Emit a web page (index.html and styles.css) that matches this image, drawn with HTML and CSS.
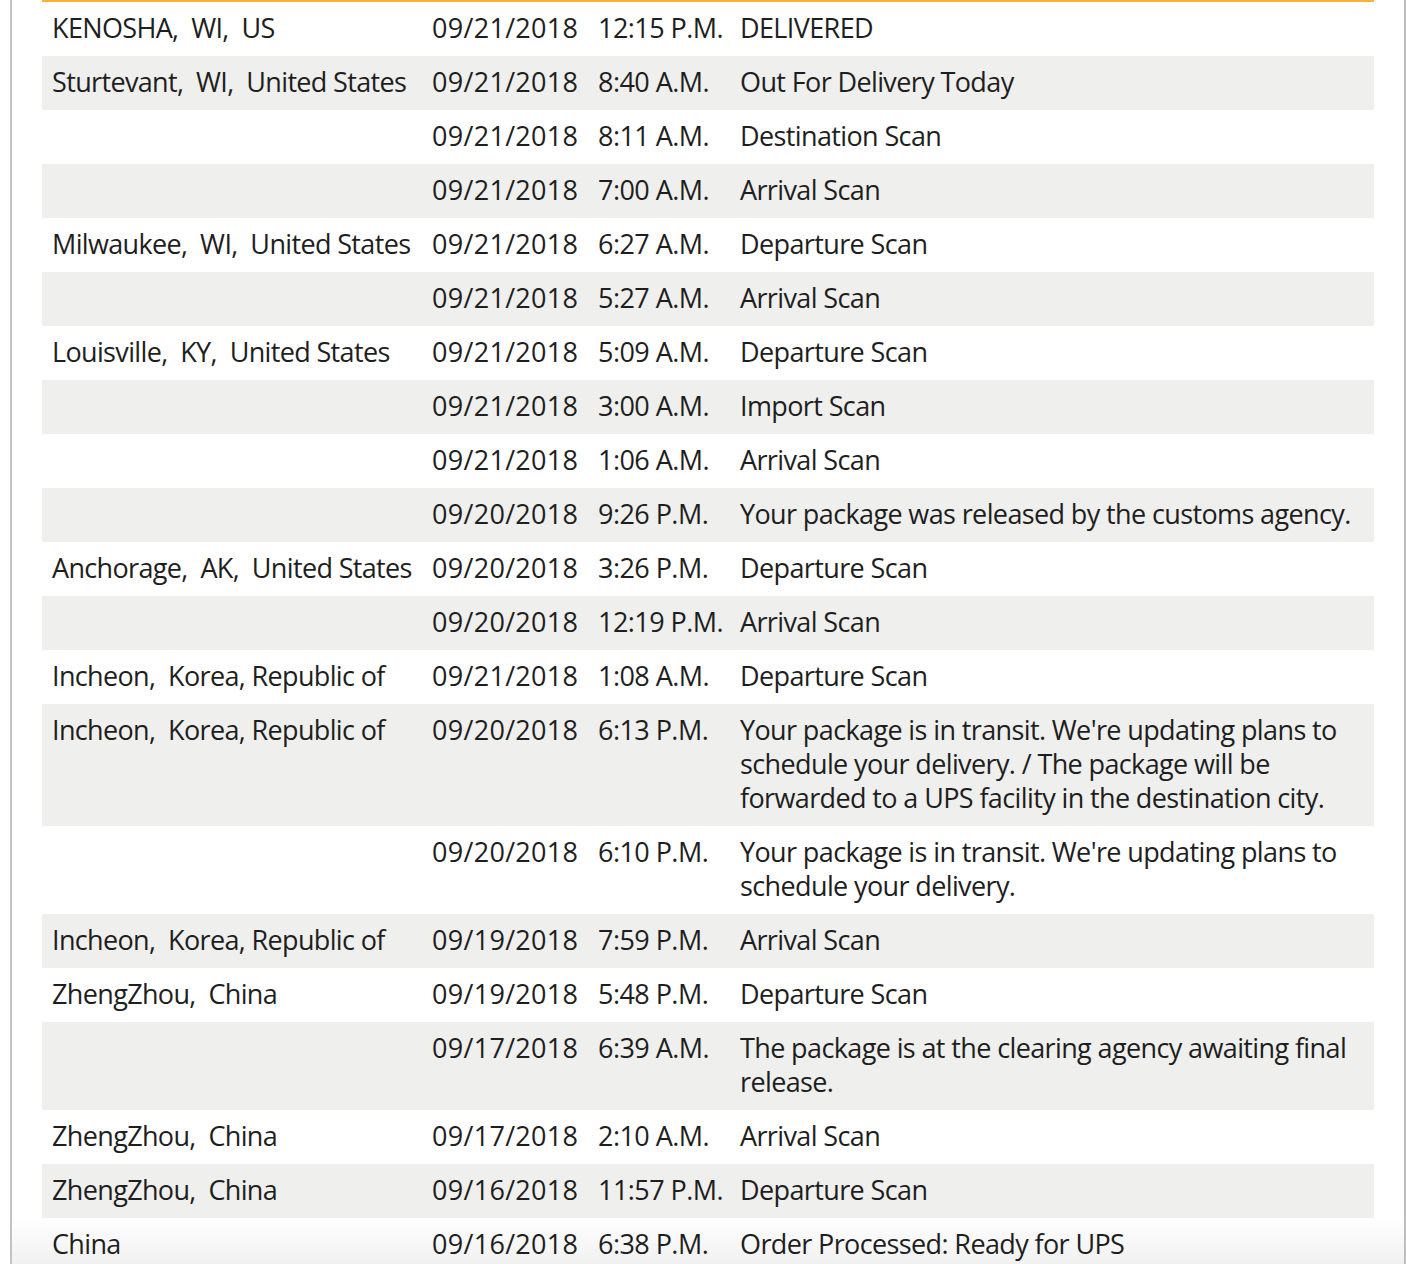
FILE: index.html
```html
<!DOCTYPE html>
<html lang="en">
<head>
<meta charset="utf-8">
<title>Shipment Progress</title>
<link rel="stylesheet" href="styles.css">
</head>
<body>
<div class="page">
  <table class="progress">
    <colgroup>
      <col class="c-loc"><col class="c-date"><col class="c-time"><col class="c-act">
    </colgroup>
    <tbody>
      <tr><td class="loc">KENOSHA,  WI,  US</td><td class="date">09/21/2018</td><td class="time">12:15 P.M.</td><td class="act">DELIVERED</td></tr>
      <tr><td class="loc">Sturtevant,  WI,  United States</td><td class="date">09/21/2018</td><td class="time">8:40 A.M.</td><td class="act">Out For Delivery Today</td></tr>
      <tr><td class="loc"></td><td class="date">09/21/2018</td><td class="time">8:11 A.M.</td><td class="act">Destination Scan</td></tr>
      <tr><td class="loc"></td><td class="date">09/21/2018</td><td class="time">7:00 A.M.</td><td class="act">Arrival Scan</td></tr>
      <tr><td class="loc">Milwaukee,  WI,  United States</td><td class="date">09/21/2018</td><td class="time">6:27 A.M.</td><td class="act">Departure Scan</td></tr>
      <tr><td class="loc"></td><td class="date">09/21/2018</td><td class="time">5:27 A.M.</td><td class="act">Arrival Scan</td></tr>
      <tr><td class="loc">Louisville,  KY,  United States</td><td class="date">09/21/2018</td><td class="time">5:09 A.M.</td><td class="act">Departure Scan</td></tr>
      <tr><td class="loc"></td><td class="date">09/21/2018</td><td class="time">3:00 A.M.</td><td class="act">Import Scan</td></tr>
      <tr><td class="loc"></td><td class="date">09/21/2018</td><td class="time">1:06 A.M.</td><td class="act">Arrival Scan</td></tr>
      <tr><td class="loc"></td><td class="date">09/20/2018</td><td class="time">9:26 P.M.</td><td class="act">Your package was released by the customs agency.</td></tr>
      <tr><td class="loc">Anchorage,  AK,  United States</td><td class="date">09/20/2018</td><td class="time">3:26 P.M.</td><td class="act">Departure Scan</td></tr>
      <tr><td class="loc"></td><td class="date">09/20/2018</td><td class="time">12:19 P.M.</td><td class="act">Arrival Scan</td></tr>
      <tr><td class="loc">Incheon,  Korea, Republic of</td><td class="date">09/21/2018</td><td class="time">1:08 A.M.</td><td class="act">Departure Scan</td></tr>
      <tr><td class="loc">Incheon,  Korea, Republic of</td><td class="date">09/20/2018</td><td class="time">6:13 P.M.</td><td class="act">Your package is in transit. We're updating plans to schedule your delivery. / The package will be forwarded to a UPS facility in the destination city.</td></tr>
      <tr><td class="loc"></td><td class="date">09/20/2018</td><td class="time">6:10 P.M.</td><td class="act">Your package is in transit. We're updating plans to schedule your delivery.</td></tr>
      <tr><td class="loc">Incheon,  Korea, Republic of</td><td class="date">09/19/2018</td><td class="time">7:59 P.M.</td><td class="act">Arrival Scan</td></tr>
      <tr><td class="loc">ZhengZhou,  China</td><td class="date">09/19/2018</td><td class="time">5:48 P.M.</td><td class="act">Departure Scan</td></tr>
      <tr><td class="loc"></td><td class="date">09/17/2018</td><td class="time">6:39 A.M.</td><td class="act">The package is at the clearing agency awaiting final release.</td></tr>
      <tr><td class="loc">ZhengZhou,  China</td><td class="date">09/17/2018</td><td class="time">2:10 A.M.</td><td class="act">Arrival Scan</td></tr>
      <tr><td class="loc">ZhengZhou,  China</td><td class="date">09/16/2018</td><td class="time">11:57 P.M.</td><td class="act">Departure Scan</td></tr>
      <tr><td class="loc">China</td><td class="date">09/16/2018</td><td class="time">6:38 P.M.</td><td class="act">Order Processed: Ready for UPS</td></tr>
    </tbody>
  </table>
</div>
</body>
</html>
```
FILE: styles.css
```css
html, body {
  margin: 0;
  padding: 0;
  background: #fff;
}

.page {
  margin: 0 0 0 10px;
  width: 1396px;
  min-height: 1264px;
  box-sizing: border-box;
  border-left: 2px solid #c2c2c2;
  border-right: 2px solid #bdbdbd;
  padding: 0 30px;
  background: linear-gradient(to bottom, #ffffff 0, #ffffff 1216px, #f1f1f1 1264px);
  font-family: "Open Sans", "Noto Sans", sans-serif;
  color: #1e1e1e;
}

.progress {
  width: 1332px;
  table-layout: fixed;
  border-collapse: collapse;
  border-top: 2px solid #fbb034;
  font-size: 27px;
  line-height: 34px;
}

.c-loc { width: 380px; }
.c-date { width: 166px; }
.c-time { width: 142px; }
.c-act { width: 644px; }

.progress td {
  padding: 9px 10px 11px;
  vertical-align: top;
}

.progress td.loc {
  white-space: pre;
  letter-spacing: -0.65px;
}

.progress td.date {
  white-space: nowrap;
  letter-spacing: 0.3px;
}

.progress td.time {
  white-space: nowrap;
  letter-spacing: -0.55px;
}

.progress td.act {
  letter-spacing: -0.62px;
}

.progress tr:nth-child(even) td {
  background: #efefed;
}
```
